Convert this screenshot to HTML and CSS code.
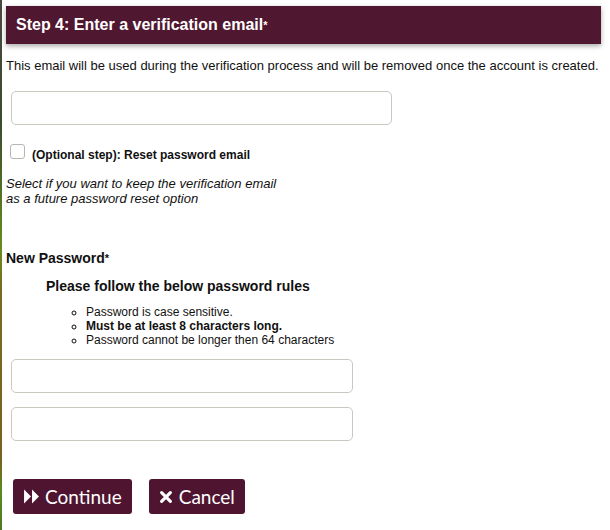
FILE: index.html
```html
<!DOCTYPE html>
<html>
<head>
<meta charset="utf-8">
<link rel="stylesheet" href="styles.css">
</head>
<body>
<div class="page">
  <div class="step-header"><h2>Step 4: Enter a verification email<span class="req">*</span></h2></div>
  <p class="intro">This email will be used during the verification process and will be removed once the account is created.</p>
  <input class="field field-email" type="text">
  <label class="check-row"><span class="checkbox"></span><span class="check-label">(Optional step): Reset password email</span></label>
  <p class="hint">Select if you want to keep the verification email<br>as a future password reset option</p>
  <div class="pw-title">New Password<span class="req">*</span></div>
  <div class="rules">
    <div class="rules-title">Please follow the below password rules</div>
    <ul class="rules-list">
      <li>Password is case sensitive.</li>
      <li class="strong">Must be at least 8 characters long.</li>
      <li>Password cannot be longer then 64 characters</li>
    </ul>
  </div>
  <input class="field field-pw" type="password">
  <input class="field field-pw second" type="password">
  <div class="actions">
    <button class="btn"><svg class="ico" viewBox="0 0 16 16" width="17" height="17"><path d="M1 1.5 L7.5 8 L1 14.5 Z M8.5 1.5 L15 8 L8.5 14.5 Z" fill="#fff"/></svg>Continue</button>
    <button class="btn"><svg class="ico x" viewBox="0 0 16 16" width="14" height="14"><path d="M3 3 L13 13 M13 3 L3 13" stroke="#fff" stroke-width="3.6" stroke-linecap="round"/></svg>Cancel</button>
  </div>
</div>
</body>
</html>
```
FILE: styles.css
```css
html {
  background: linear-gradient(to bottom, #4a4a40 0px, #3c4a30 120px, #5a7a20 210px, #6a8a20 250px, #7a6a20 290px, #7a6020 460px, #5a8a20 490px, #4a7a20 530px) left top / 2px 100% no-repeat, #fff;
  min-height: 100%;
}
body {
  margin: 0;
  font-family: "Liberation Sans", Arial, sans-serif;
  color: #111;
}
.page {
  padding: 6px 9px 0 6px;
}
.step-header {
  background: #501730;
  height: 38px;
  box-shadow: 0 2px 5px rgba(0, 0, 0, 0.35);
  display: flex;
  align-items: center;
  padding-left: 10px;
}
.step-header h2 {
  margin: 0;
  color: #fff;
  font-size: 16px;
  font-weight: bold;
}
.req {
  font-size: 11px;
  vertical-align: 1px;
}
.intro {
  margin: 14px 0 0 0;
  font-size: 13px;
  line-height: 16px;
}
.field {
  display: block;
  box-sizing: border-box;
  border: 1px solid #cbc8c2;
  border-radius: 5px;
  background: #fff;
  height: 34px;
  padding: 0 8px;
  font-family: inherit;
}
.field-email {
  width: 381px;
  margin: 17px 0 0 5px;
}
.check-row {
  display: flex;
  align-items: center;
  margin: 19px 0 0 4px;
}
.checkbox {
  width: 15px;
  height: 15px;
  box-sizing: border-box;
  border: 1px solid #b8b6b0;
  border-radius: 3px;
  background: #fff;
  margin-top: -4px;
}
.check-label {
  font-size: 12px;
  font-weight: bold;
  margin-left: 7px;
  margin-top: 4px;
}
.hint {
  margin: 14px 0 0 0;
  font-size: 13px;
  font-style: italic;
  line-height: 15px;
}
.pw-title {
  margin-top: 44px;
  font-size: 14px;
  font-weight: bold;
}
.rules {
  margin-left: 40px;
  margin-top: 12px;
}
.rules-title {
  font-size: 14px;
  font-weight: bold;
}
.rules-list {
  margin: 11px 0 0 0;
  padding-left: 40px;
  list-style: circle;
  font-size: 12px;
  line-height: 14px;
}
.rules-list .strong {
  font-weight: bold;
}
.field-pw {
  width: 342px;
  margin: 12px 0 0 5px;
}
.field-pw.second {
  margin-top: 14px;
}
.actions {
  display: flex;
  gap: 17px;
  margin: 38px 0 0 7px;
}
.btn {
  display: flex;
  align-items: center;
  gap: 5px;
  height: 35px;
  padding: 0 10px;
  border: none;
  border-radius: 3px;
  background: #4f1530;
  color: #fff;
  font-family: Lato, "Open Sans", sans-serif;
  font-size: 19px;
}
.ico.x {
  margin-right: 1px;
}
```
